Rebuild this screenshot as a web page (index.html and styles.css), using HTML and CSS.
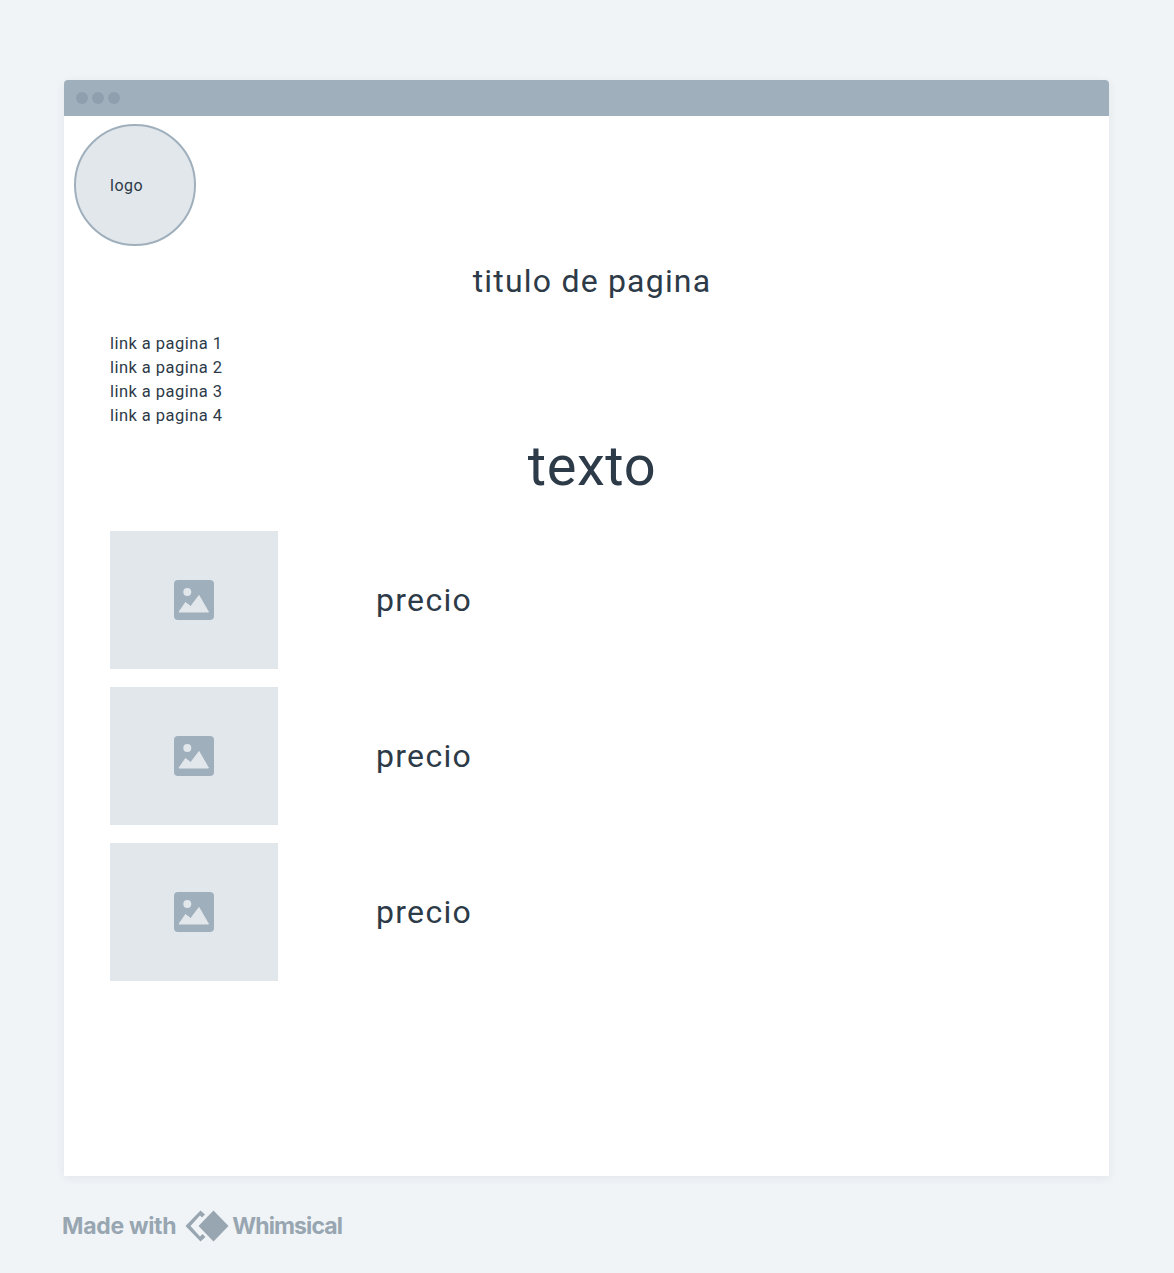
FILE: index.html
```html
<!DOCTYPE html>
<html lang="es">
<head>
<meta charset="utf-8">
<title>Wireframe</title>
<link rel="stylesheet" href="styles.css">
</head>
<body>
<main class="window">
  <header class="titlebar">
    <span class="dot"></span><span class="dot"></span><span class="dot"></span>
  </header>
  <div class="content">
    <div class="logo"><span>logo</span></div>
    <h1 class="page-title">titulo de pagina</h1>
    <nav class="links">
      <a>link a pagina 1</a>
      <a>link a pagina 2</a>
      <a>link a pagina 3</a>
      <a>link a pagina 4</a>
    </nav>
    <h2 class="headline">texto</h2>
    <section class="products">
      <article class="product">
        <div class="thumb"><svg class="pic" viewBox="0 0 40 40"><rect width="40" height="40" rx="4" fill="#9fafbc"/><circle cx="13.3" cy="12" r="4" fill="#e2e7ec"/><path d="M5 32 L11.5 22.5 L16.7 26.5 L25 15.5 L34.5 32 Z" fill="#e2e7ec" stroke="#e2e7ec" stroke-linejoin="round"/></svg></div>
        <p class="price">precio</p>
      </article>
      <article class="product">
        <div class="thumb"><svg class="pic" viewBox="0 0 40 40"><rect width="40" height="40" rx="4" fill="#9fafbc"/><circle cx="13.3" cy="12" r="4" fill="#e2e7ec"/><path d="M5 32 L11.5 22.5 L16.7 26.5 L25 15.5 L34.5 32 Z" fill="#e2e7ec" stroke="#e2e7ec" stroke-linejoin="round"/></svg></div>
        <p class="price">precio</p>
      </article>
      <article class="product">
        <div class="thumb"><svg class="pic" viewBox="0 0 40 40"><rect width="40" height="40" rx="4" fill="#9fafbc"/><circle cx="13.3" cy="12" r="4" fill="#e2e7ec"/><path d="M5 32 L11.5 22.5 L16.7 26.5 L25 15.5 L34.5 32 Z" fill="#e2e7ec" stroke="#e2e7ec" stroke-linejoin="round"/></svg></div>
        <p class="price">precio</p>
      </article>
    </section>
  </div>
</main>
<footer class="made">
  <span>Made with</span>
  <svg class="mark" viewBox="0 0 44 32"><path d="M15.5 0.5 L0.5 16 L15.5 31.5 L20.5 27 L17.5 24 L15 26.5 L5.5 16 L15 5.5 L17 7.5 L20 4.5 Z" fill="#98a6b1"/><path d="M28.5 0.5 L43.5 16 L28.5 31.5 L13.5 16 Z" fill="#98a6b1"/></svg>
  <span class="brand">Whimsical</span>
</footer>
</body>
</html>
```
FILE: styles.css
```css
* { box-sizing: border-box; }
html, body { margin: 0; }
body {
  width: 1174px;
  height: 1273px;
  overflow: hidden;
  padding: 80px 65px 0 64px;
  background: #f0f4f7;
  font-family: "Roboto", "Noto Sans", sans-serif;
  color: #2d3a48;
}
.window {
  height: 1096px;
  background: #fff;
  border-radius: 4px 4px 0 0;
  box-shadow: 0 2px 10px rgba(45, 58, 72, 0.07);
  overflow: hidden;
}
.titlebar {
  height: 36px;
  background: #9fafbc;
  display: flex;
  align-items: center;
  gap: 4px;
  padding-left: 12px;
}
.dot {
  width: 12px;
  height: 12px;
  border-radius: 50%;
  background: #8f9fae;
}
.content { padding: 8px 0 0 10px; }
.logo {
  width: 122px;
  height: 122px;
  border-radius: 50%;
  background: #e2e7ec;
  border: 2px solid #9fafbc;
  padding: 47px 0 0 34px;
  font-size: 16px;
  line-height: 26px;
  letter-spacing: 0.5px;
}
.page-title {
  margin: 15px 0 0;
  text-align: center;
  font-size: 32px;
  line-height: 40px;
  font-weight: 400;
  letter-spacing: 1.2px;
  width: 1036px;
}
.links {
  margin: 31px 0 0 36px;
  display: flex;
  flex-direction: column;
  font-size: 16.5px;
  line-height: 24px;
  letter-spacing: 0.45px;
}
.headline {
  margin: 0;
  width: 1036px;
  text-align: center;
  font-size: 56px;
  line-height: 76px;
  font-weight: 400;
  letter-spacing: 0.6px;
}
.products {
  margin: 27px 0 0 36px;
  display: flex;
  flex-direction: column;
  gap: 18px;
}
.product { display: flex; align-items: center; height: 138px; }
.thumb {
  width: 168px;
  height: 138px;
  background: #e2e7ec;
  display: flex;
  align-items: center;
  justify-content: center;
}
.pic { width: 40px; height: 40px; margin-bottom: 1px; }
.price {
  margin: 0 0 0 98px;
  font-size: 32px;
  line-height: 40px;
  letter-spacing: 1.3px;
}
.made {
  margin: 34px 0 0 -2px;
  display: flex;
  align-items: center;
  gap: 9px;
  height: 32px;
  font-family: "Inter", sans-serif;
  font-weight: 700;
  font-size: 23px;
  letter-spacing: -0.3px;
  color: #98a6b1;
}
.mark { width: 44px; height: 32px; margin-right: -6px; }
.brand { letter-spacing: -0.9px; }
```
